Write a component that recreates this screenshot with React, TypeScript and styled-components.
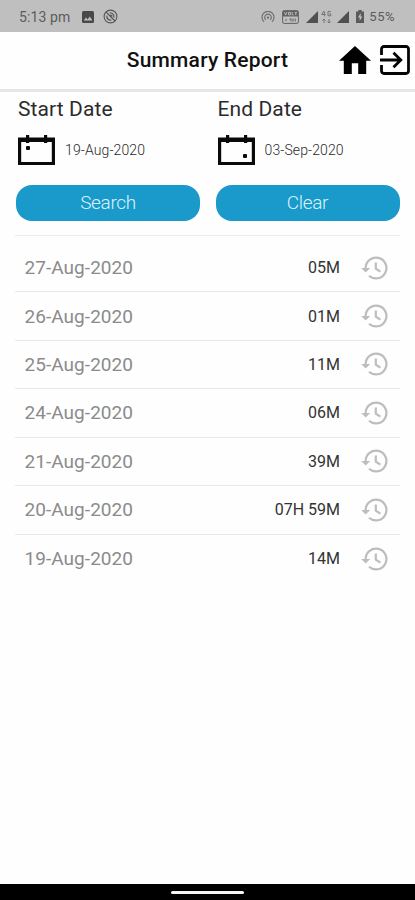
import React from "react";
import styled, { createGlobalStyle } from "styled-components";

const GlobalStyle = createGlobalStyle`
  * { box-sizing: border-box; }
  body { margin: 0; background: #fefefe; font-family: Roboto, sans-serif; }
  svg { display: block; flex: none; }
`;

const Screen = styled.div`
  display: flex;
  flex-direction: column;
  width: 415px;
  height: 900px;
  overflow: hidden;
  background: #fefefe;
`;

const StatusBar = styled.div`
  display: flex;
  align-items: center;
  justify-content: space-between;
  height: 32px;
  padding: 1px 20px 0 19px;
  background: #bfbfbf;
  color: #5c5c5c;
`;

const StatusGroup = styled.div`
  display: flex;
  align-items: center;
`;

const StatusText = styled.span<{ $size: number; $spacing: number }>`
  font-size: ${(p) => p.$size}px;
  letter-spacing: ${(p) => p.$spacing}px;
  line-height: 16px;
  white-space: nowrap;
`;

const Gap = styled.span<{ $w: number }>`
  width: ${(p) => p.$w}px;
`;

const Header = styled.header`
  display: grid;
  grid-template-columns: 1fr auto 1fr;
  align-items: center;
  height: 60px;
  padding-bottom: 1px;
  border-bottom: 3px solid #e6e6e6;
`;

const Title = styled.h1`
  grid-column: 2;
  margin: 0;
  font-size: 21px;
  font-weight: 500;
  letter-spacing: 0.2px;
  line-height: 26px;
  color: #111;
  white-space: nowrap;
`;

const HeaderActions = styled.div`
  display: flex;
  justify-content: flex-end;
  align-items: center;
  gap: 9px;
  padding: 0 5px 0 0;
`;

const Filters = styled.section`
  display: grid;
  grid-template-columns: 184px 184px;
  column-gap: 15.5px;
  height: 143px;
  padding: 4px 0 0 16px;
  flex: none;
`;

const Field = styled.div`
  display: flex;
  flex-direction: column;
`;

const Label = styled.div`
  padding-left: 2px;
  font-size: 21px;
  letter-spacing: 0.1px;
  line-height: 26px;
  color: #2c2c2c;
`;

const DatePick = styled.div`
  display: flex;
  align-items: center;
  gap: 10px;
  height: 30px;
  margin: 13px 0 19.5px 2px;
`;

const DateValue = styled.span`
  font-size: 14px;
  line-height: 18px;
  font-weight: 300;
  letter-spacing: 0.12px;
  color: #2a2a2a;
`;

const Button = styled.button`
  height: 36.5px;
  padding: 0;
  border: 0;
  border-radius: 16px;
  background: #1a9aca;
  color: #d9f3fc;
  font: 300 19px/36px Roboto, sans-serif;
  letter-spacing: -0.35px;
`;

const Report = styled.ul`
  flex: 1;
  margin: 0 15px;
  padding: 7.9px 0 0;
  border-top: 1px solid #ebebeb;
  list-style: none;
`;

const Row = styled.li`
  display: flex;
  align-items: center;
  height: 48.45px;
  padding: 0 12px 0 9.5px;
  border-bottom: 1px solid #e8e8e8;
  &:last-child { border-bottom: 0; }
`;

const RowDate = styled.span`
  flex: 1;
  font-size: 19px;
  letter-spacing: 0.05px;
  color: #8b8b8b;
`;

const Duration = styled.span`
  margin-right: 21px;
  font-size: 16px;
  color: #333;
`;

const NavBar = styled.div`
  display: flex;
  justify-content: center;
  align-items: center;
  height: 16px;
  padding-top: 1px;
  background: #000;
`;

const HomePill = styled.div`
  width: 73px;
  height: 3px;
  border-radius: 2px;
  background: #f5f5f5;
`;

const PhotoIcon = () => (
  <svg width="12" height="12" viewBox="0 0 12 12">
    <rect width="12" height="12" rx="1.5" fill="#484848" />
    <path d="M1.8 9.6 4 6.6l1.6 1.8 2.2-2.9 2.6 4.1z" fill="#bfbfbf" />
  </svg>
);

const NoDisturbIcon = () => (
  <svg width="15" height="15" viewBox="0 0 15 15" fill="none" stroke="#555">
    <circle cx="7.5" cy="7.5" r="6.4" strokeWidth="1.1" />
    <path d="M3.2 3.2l8.8 8.8M6.8 3.8a3.8 3.8 0 0 1 4 4.8M3.9 6.6a3.8 3.8 0 0 0 4.4 4.5M7.4 6l2 1.2" strokeWidth="1.2" />
  </svg>
);

const HotspotIcon = () => (
  <svg width="14" height="12" viewBox="0 0 14 12" fill="none" stroke="#707070" strokeWidth="1.2">
    <path d="M3 10.8a6 6 0 1 1 8 0M4.7 8.8a3.3 3.3 0 1 1 4.6 0" />
    <circle cx="7" cy="6.7" r="1.1" fill="#666" stroke="none" />
  </svg>
);

const VolteIcon = () => (
  <svg width="17" height="14" viewBox="0 0 17 14" fill="none" stroke="#626262">
    <rect x=".6" y=".6" width="15.8" height="12.8" rx="1.5" strokeWidth="1" />
    <rect x="1" y="1" width="15" height="5.5" fill="#626262" stroke="none" />
    <path d="M2.5 2.2l1.2 2.8 1.2-2.8M6.5 2.4h2v2.4h-2zM10.2 2v2.8h1.5M12.7 2.5H15M13.8 2.5v2.6" stroke="#bfbfbf" strokeWidth=".9" />
    <path d="M3 10h2M7.5 9.5 9 8.5v3M11 8.5v3M13.2 8.5v3" strokeWidth="1" />
  </svg>
);

const SignalIcon = () => (
  <svg width="12" height="12" viewBox="0 0 12 12">
    <path d="M12 0v12H0z" fill="#505050" />
  </svg>
);

const DataIcon = () => (
  <svg width="11" height="14" viewBox="0 0 11 14" fill="none" stroke="#727272">
    <path d="M3.2.8.8 4.5h3.6M3.6 2v4.3M9.8 1.5H7v4.3h2.8V3.9H8.4M3 9v4M1.5 10.5 3 9l1.5 1.5M8 9v4M6.5 11.5 8 13l1.5-1.5" />
  </svg>
);

const BatteryIcon = () => (
  <svg width="8" height="13" viewBox="0 0 8 13">
    <path d="M2.3 0h3.4v1.4H8V13H0V1.4h2.3z" fill="#5a5a5a" />
    <path d="M4.7 3 2 7.5h1.7V11l2.6-4.6H4.7z" fill="#bfbfbf" />
  </svg>
);

const HouseIcon = () => (
  <svg width="32" height="28" viewBox="2 3 20 17" preserveAspectRatio="none">
    <path d="M10 20v-6.5h4V20h5v-8h3L12 3 2 12h3v8z" fill="#000" />
  </svg>
);

const ExitIcon = () => (
  <svg width="30" height="30" viewBox="0 0 30 30" fill="none" stroke="#050505" strokeWidth="2.8">
    <path d="M1.5 10V4a2.5 2.5 0 0 1 2.5-2.5h22A2.5 2.5 0 0 1 28.5 4v22a2.5 2.5 0 0 1-2.5 2.5H4A2.5 2.5 0 0 1 1.5 26v-6M0 15h20M13.5 7.7l7.3 7.3-7.3 7.3" />
  </svg>
);

const CalendarIcon = ({ dotX, dotY }: { dotX: number; dotY: number }) => (
  <svg width="37" height="30" viewBox="0 0 37 30">
    <path d="M0 2.5h37V30H0zM3.2 7v20h30.6V7z" fill="#0a0a0a" fillRule="evenodd" />
    <path d="M8 0h3.2v8H8zM26 0h3.2v8H26z" fill="#0a0a0a" />
    <rect x={dotX} y={dotY} width="4" height="4" rx="1" fill="#0a0a0a" />
  </svg>
);

const HistoryIcon = () => (
  <svg width="27" height="24" viewBox="0 0 27 24" fill="none" stroke="#bdbdbd" strokeWidth="2.2">
    <path d="M4.6 13V12a10.4 10.4 0 1 1 3.4 7.7M14.8 6.6v6l4.6 3" />
    <path d="M.2 12h9L4.7 16.6z" fill="#bdbdbd" stroke="none" />
  </svg>
);

const entries = [
  ["27-Aug-2020", "05M"],
  ["26-Aug-2020", "01M"],
  ["25-Aug-2020", "11M"],
  ["24-Aug-2020", "06M"],
  ["21-Aug-2020", "39M"],
  ["20-Aug-2020", "07H 59M"],
  ["19-Aug-2020", "14M"],
];

export default function App() {
  return (
    <>
      <GlobalStyle />
      <Screen>
        <StatusBar>
          <StatusGroup>
            <StatusText $size={14} $spacing={0.1}>5:13 pm</StatusText>
            <Gap $w={12} />
            <PhotoIcon />
            <Gap $w={9} />
            <NoDisturbIcon />
          </StatusGroup>
          <StatusGroup>
            <HotspotIcon />
            <Gap $w={7} />
            <VolteIcon />
            <Gap $w={7} />
            <SignalIcon />
            <Gap $w={3} />
            <DataIcon />
            <Gap $w={5} />
            <SignalIcon />
            <Gap $w={7} />
            <BatteryIcon />
            <Gap $w={5} />
            <StatusText $size={13} $spacing={0.5}>55%</StatusText>
          </StatusGroup>
        </StatusBar>
        <Header>
          <Title>Summary Report</Title>
          <HeaderActions>
            <HouseIcon />
            <ExitIcon />
          </HeaderActions>
        </Header>
        <Filters>
          <Field>
            <Label>Start Date</Label>
            <DatePick>
              <CalendarIcon dotX={8} dotY={11} />
              <DateValue>19-Aug-2020</DateValue>
            </DatePick>
            <Button>Search</Button>
          </Field>
          <Field>
            <Label>End Date</Label>
            <DatePick>
              <CalendarIcon dotX={25} dotY={19} />
              <DateValue>03-Sep-2020</DateValue>
            </DatePick>
            <Button>Clear</Button>
          </Field>
        </Filters>
        <Report>
          {entries.map(([date, duration]) => (
            <Row key={date}>
              <RowDate>{date}</RowDate>
              <Duration>{duration}</Duration>
              <HistoryIcon />
            </Row>
          ))}
        </Report>
        <NavBar>
          <HomePill />
        </NavBar>
      </Screen>
    </>
  );
}
